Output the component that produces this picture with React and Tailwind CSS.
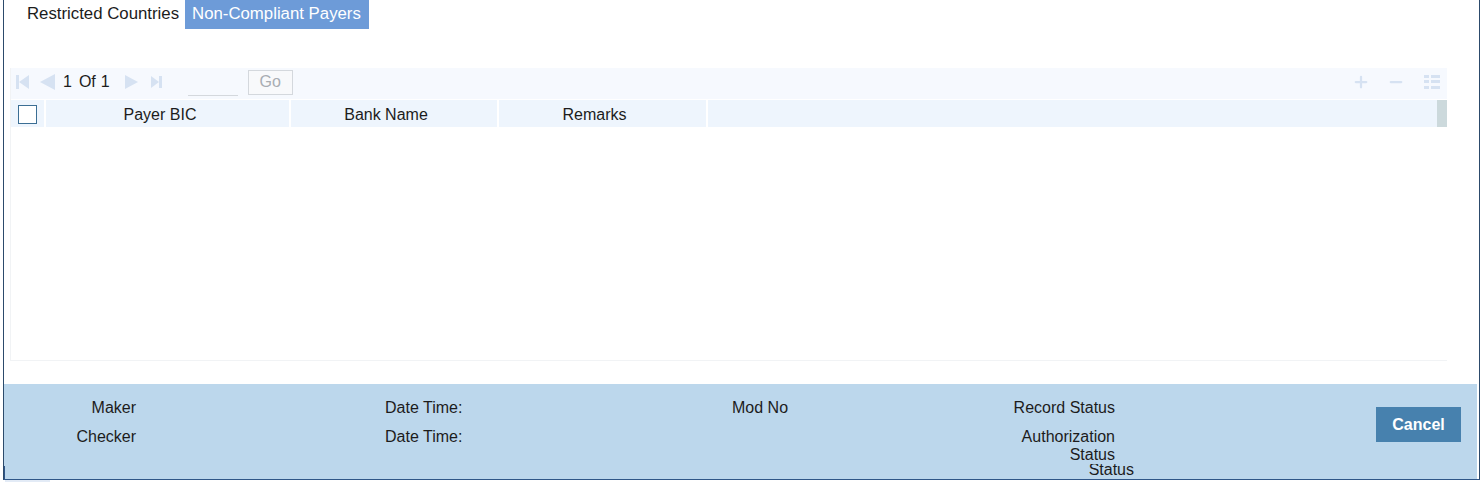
import React from 'react';
import { Plus, Minus } from 'lucide-react';

const First = () => (
  <svg width="13" height="14" viewBox="0 0 13 14" fill="#d6e2f2"><rect x="0" y="0" width="3" height="14" /><path d="M13 0v14L3 7z" /></svg>
);
const Prev = () => (
  <svg width="15" height="16" viewBox="0 0 15 16" fill="#d6e2f2"><path d="M15 0v16L0 8z" /></svg>
);
const Next = () => (
  <svg width="13" height="14" viewBox="0 0 13 14" fill="#d6e2f2"><path d="M0 0v14l13-7z" /></svg>
);
const Last = () => (
  <svg width="11" height="12" viewBox="0 0 11 12" fill="#d6e2f2"><path d="M0 0v12l8-6z" /><rect x="8" y="0" width="3" height="12" /></svg>
);
const ListIcon = () => (
  <svg width="16" height="16" viewBox="0 0 16 16" fill="#d6e2f2">
    <rect x="0" y="1" width="5" height="3" /><rect x="7" y="1" width="9" height="3" />
    <rect x="0" y="6" width="5" height="3" /><rect x="7" y="6" width="9" height="3" />
    <rect x="0" y="12" width="5" height="3" /><rect x="7" y="12" width="9" height="3" />
  </svg>
);

export default function App() {
  return (
    <div className="relative h-[482px] w-[1482px] overflow-hidden bg-white text-[16px] leading-[18px] text-[#1c1c1c] font-['Liberation_Sans',Arial,sans-serif]">
      <div className="ml-[3px] mr-[2px] flex h-[480px] flex-col border-x border-b border-x-[#2c4a6b] border-b-[#2f5688]">
        <div className="flex h-[29px] pl-[23px] text-[16.8px]">
          <div className="flex items-center pb-[2px]">Restricted Countries</div>
          <div className="ml-[6px] flex items-center bg-[#6d9bd8] pl-[7px] pr-[8px] pb-[2px] text-white">Non-Compliant Payers</div>
        </div>

        <div className="mt-[39px] ml-[6px] mr-[32px] flex h-[293px] flex-col border-b border-l border-[#f1f3f5]">
          <div className="flex h-[31px] items-center bg-[#f6f9fe] pb-[3px] pl-[5px] pr-[7px]">
            <First />
            <span className="ml-[11px]"><Prev /></span>
            <span className="ml-[8px]">1</span>
            <span className="ml-[7px]">Of</span>
            <span className="ml-[5px]">1</span>
            <span className="ml-[15px]"><Next /></span>
            <span className="ml-[13px]"><Last /></span>
            <div className="ml-[26px] mt-[2px] h-[26px] w-[50px] border-b border-[#d4d8dd]" />
            <button className="ml-[10px] h-[25px] w-[45px] border border-[#d4d8dd] bg-[#f8f9fb] text-[#a8adb3]">Go</button>
            <div className="ml-auto flex items-center">
              <Plus size={18} strokeWidth={3} color="#d6e2f2" />
              <Minus size={18} strokeWidth={3} color="#d6e2f2" className="ml-[17px]" />
              <span className="ml-[19px]"><ListIcon /></span>
            </div>
          </div>
          <div className="mt-[1px] flex h-[27px] items-center bg-[#eef5fd]">
            <div className="flex h-full w-[35px] items-center border-r-2 border-white pl-[7px] pt-[2px]">
              <div className="h-[19px] w-[19px] border border-[#3b6e94] bg-white" />
            </div>
            <div className="flex h-full w-[245px] items-center justify-center border-r-2 border-white pr-[15px] pt-[2px]">Payer BIC</div>
            <div className="flex h-full w-[208px] items-center justify-center border-r-2 border-white pr-[16px] pt-[2px]">Bank Name</div>
            <div className="flex h-full w-[209px] items-center justify-center border-r-2 border-white pr-[16px] pt-[2px]">Remarks</div>
            <div className="ml-auto h-full w-[10px] bg-[#ccd9dc]" />
          </div>
        </div>

        <div className="mt-[23px] mr-[2px] flex h-[95px] overflow-hidden bg-[#bcd7ec]">
          <div className="mt-[9px] w-[132px] text-right leading-[29px]">
            <div>Maker</div>
            <div>Checker</div>
          </div>
          <div className="ml-[249px] mt-[9px] w-[200px] leading-[29px]">
            <div>Date Time:</div>
            <div>Date Time:</div>
          </div>
          <div className="ml-[147px] mt-[9px] w-[60px] leading-[29px]">Mod No</div>
          <div className="ml-[154px] mt-[9px] w-[169px] text-right">
            <div className="leading-[29px]">Record Status</div>
            <div className="mt-[6px]">Authorization</div>
            <div>Status</div>
            <div className="mr-[-19px] h-[11px] overflow-hidden">
              <div className="mt-[-3px]">Status</div>
            </div>
          </div>
          <button className="ml-auto mr-[16px] mt-[23px] h-[35px] w-[85px] bg-[#4781ae] font-bold text-white">Cancel</button>
        </div>
      </div>
      <div className="ml-[5px] h-[2px] w-[45px] bg-[#e3ebf6]" />
      <div className="absolute left-[4px] top-[466px] h-[14px] w-px bg-[#2f5688]" />
    </div>
  );
}
